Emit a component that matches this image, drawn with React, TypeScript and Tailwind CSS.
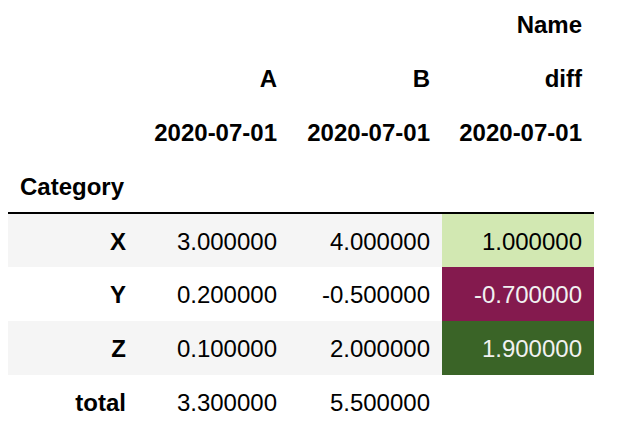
const rows = [
  { label: 'X', a: '3.000000', b: '4.000000', diff: '1.000000', diffCls: 'bg-[#d2e8b2] text-black', stripe: true },
  { label: 'Y', a: '0.200000', b: '-0.500000', diff: '-0.700000', diffCls: 'bg-[#841a4e] text-[#f1f1f1]', stripe: false },
  { label: 'Z', a: '0.100000', b: '2.000000', diff: '1.900000', diffCls: 'bg-[#3a6427] text-[#f1f1f1]', stripe: true },
  { label: 'total', a: '3.300000', b: '5.500000', diff: '', diffCls: '', stripe: false },
];

export default function App() {
  return (
    <div className="w-[634px] h-[440px] overflow-hidden bg-white pl-2 font-['Liberation_Sans',Arial,sans-serif] text-[24px] text-black">
      <table className="-mt-[3px] border-collapse table-fixed w-[586px]">
        <colgroup>
          <col className="w-[130px]" />
          <col className="w-[151px]" />
          <col className="w-[153px]" />
          <col className="w-[152px]" />
        </colgroup>
        <thead className="border-b-2 border-black font-bold">
          <tr className="h-[54px]">
            <th />
            <th />
            <th />
            <th className="px-3 pt-[2px] text-right">Name</th>
          </tr>
          <tr className="h-[54px]">
            <th />
            <th className="px-3 pt-[2px] text-right">A</th>
            <th className="px-3 pt-[2px] text-right">B</th>
            <th className="px-3 pt-[2px] text-right">diff</th>
          </tr>
          <tr className="h-[54px]">
            <th />
            <th className="px-3 pt-[2px] text-right">2020-07-01</th>
            <th className="px-3 pt-[2px] text-right">2020-07-01</th>
            <th className="px-3 pt-[2px] text-right">2020-07-01</th>
          </tr>
          <tr className="h-[54px]">
            <th className="px-3 pt-[2px] text-left">Category</th>
            <th />
            <th />
            <th />
          </tr>
        </thead>
        <tbody>
          {rows.map(r => (
            <tr key={r.label} className={`h-[54px] ${r.stripe ? 'bg-[#f5f5f5]' : 'bg-white'}`}>
              <th className="px-3 pt-[2px] text-right font-bold">{r.label}</th>
              <td className="px-3 pt-[2px] text-right">{r.a}</td>
              <td className="px-3 pt-[2px] text-right">{r.b}</td>
              <td className={`px-3 pt-[2px] text-right ${r.diffCls || 'bg-white'}`}>{r.diff}</td>
            </tr>
          ))}
        </tbody>
      </table>
    </div>
  );
}
